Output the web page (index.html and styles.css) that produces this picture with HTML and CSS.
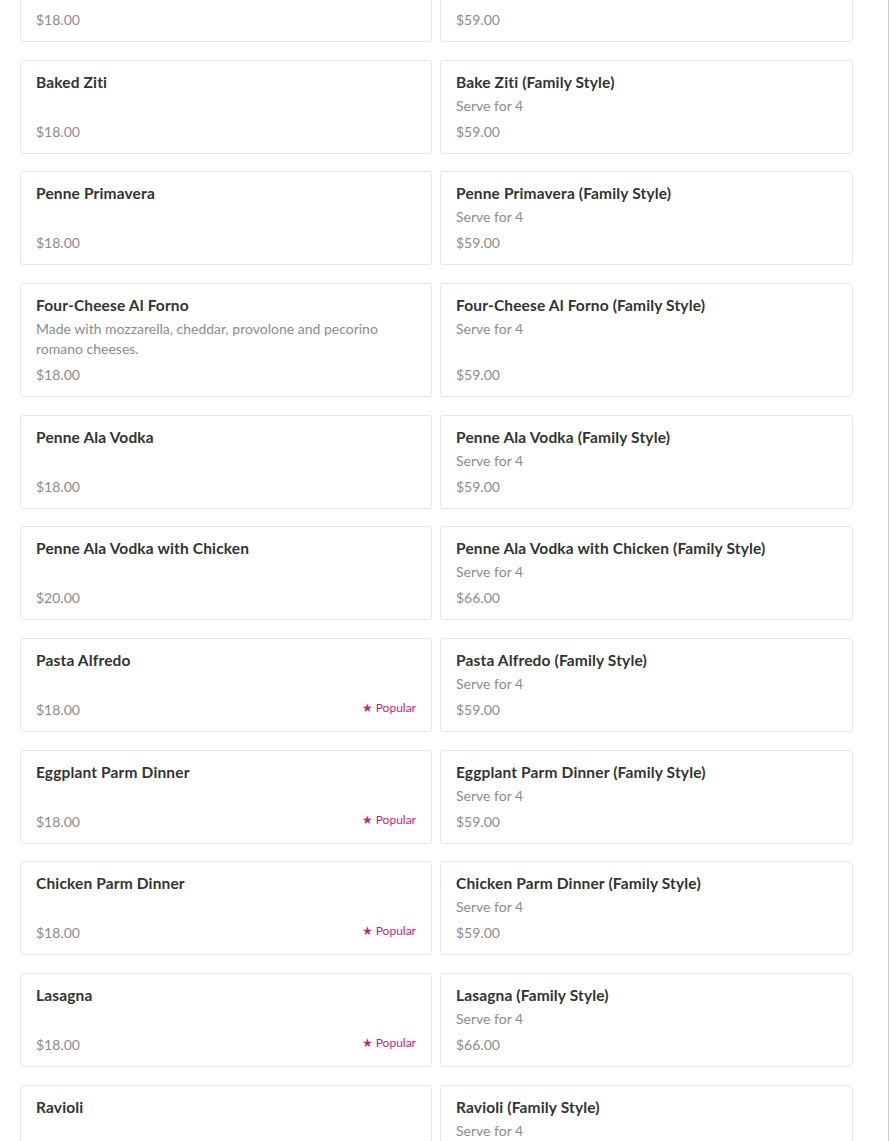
FILE: index.html
```html
<!DOCTYPE html>
<html lang="en">
<head>
<meta charset="utf-8">
<title>Menu</title>
<link rel="stylesheet" href="styles.css">
</head>
<body>
<div class="page">
  <div class="menu">
    <div class="card"><div class="name">Spaghetti Marinara</div><div class="desc"></div><div class="foot"><span class="price">$18.00</span></div></div>
    <div class="card"><div class="name">Spaghetti Marinara (Family Style)</div><div class="desc">Serve for 4</div><div class="foot"><span class="price">$59.00</span></div></div>

    <div class="card"><div class="name">Baked Ziti</div><div class="desc"></div><div class="foot"><span class="price">$18.00</span></div></div>
    <div class="card"><div class="name">Bake Ziti (Family Style)</div><div class="desc">Serve for 4</div><div class="foot"><span class="price">$59.00</span></div></div>

    <div class="card"><div class="name">Penne Primavera</div><div class="desc"></div><div class="foot"><span class="price">$18.00</span></div></div>
    <div class="card"><div class="name">Penne Primavera (Family Style)</div><div class="desc">Serve for 4</div><div class="foot"><span class="price">$59.00</span></div></div>

    <div class="card"><div class="name">Four-Cheese Al Forno</div><div class="desc">Made with mozzarella, cheddar, provolone and pecorino romano cheeses.</div><div class="foot"><span class="price">$18.00</span></div></div>
    <div class="card"><div class="name">Four-Cheese Al Forno (Family Style)</div><div class="desc">Serve for 4</div><div class="foot"><span class="price">$59.00</span></div></div>

    <div class="card"><div class="name">Penne Ala Vodka</div><div class="desc"></div><div class="foot"><span class="price">$18.00</span></div></div>
    <div class="card"><div class="name">Penne Ala Vodka (Family Style)</div><div class="desc">Serve for 4</div><div class="foot"><span class="price">$59.00</span></div></div>

    <div class="card"><div class="name">Penne Ala Vodka with Chicken</div><div class="desc"></div><div class="foot"><span class="price">$20.00</span></div></div>
    <div class="card"><div class="name">Penne Ala Vodka with Chicken (Family Style)</div><div class="desc">Serve for 4</div><div class="foot"><span class="price">$66.00</span></div></div>

    <div class="card"><div class="name">Pasta Alfredo</div><div class="desc"></div><div class="foot"><span class="price">$18.00</span><span class="popular">★ Popular</span></div></div>
    <div class="card"><div class="name">Pasta Alfredo (Family Style)</div><div class="desc">Serve for 4</div><div class="foot"><span class="price">$59.00</span></div></div>

    <div class="card"><div class="name">Eggplant Parm Dinner</div><div class="desc"></div><div class="foot"><span class="price">$18.00</span><span class="popular">★ Popular</span></div></div>
    <div class="card"><div class="name">Eggplant Parm Dinner (Family Style)</div><div class="desc">Serve for 4</div><div class="foot"><span class="price">$59.00</span></div></div>

    <div class="card"><div class="name">Chicken Parm Dinner</div><div class="desc"></div><div class="foot"><span class="price">$18.00</span><span class="popular">★ Popular</span></div></div>
    <div class="card"><div class="name">Chicken Parm Dinner (Family Style)</div><div class="desc">Serve for 4</div><div class="foot"><span class="price">$59.00</span></div></div>

    <div class="card"><div class="name">Lasagna</div><div class="desc"></div><div class="foot"><span class="price">$18.00</span><span class="popular">★ Popular</span></div></div>
    <div class="card"><div class="name">Lasagna (Family Style)</div><div class="desc">Serve for 4</div><div class="foot"><span class="price">$66.00</span></div></div>

    <div class="card"><div class="name">Ravioli</div><div class="desc"></div><div class="foot"><span class="price">$18.00</span></div></div>
    <div class="card"><div class="name">Ravioli (Family Style)</div><div class="desc">Serve for 4</div><div class="foot"><span class="price">$59.00</span></div></div>
  </div>
</div>
</body>
</html>
```
FILE: styles.css
```css
html, body {
  margin: 0;
  padding: 0;
  background: #fff;
  overflow: hidden;
}
body {
  font-family: Lato, "Liberation Sans", sans-serif;
  color: #333;
}
.page {
  width: 889px;
  min-height: 100vh;
  border-right: 1px solid #d2d2d2;
  box-sizing: border-box;
  padding: 0 0 0 20px;
}
.menu {
  display: grid;
  grid-template-columns: 412px 413px;
  column-gap: 8px;
  row-gap: 17.67px;
  margin-top: -52px;
}
.card {
  display: flex;
  flex-direction: column;
  border: 1px solid #e6e6e6;
  border-radius: 3px;
  padding: 9px 15px 11px;
  background: #fff;
}
.name {
  font-size: 15.5px;
  font-weight: 700;
  letter-spacing: 0.15px;
  line-height: 24px;
  color: #333;
}
.desc {
  font-size: 14px;
  line-height: 20px;
  min-height: 20px;
  margin-top: 2px;
  color: #8c8c8c;
}
.foot {
  margin-top: auto;
  padding-top: 6px;
  display: flex;
  justify-content: space-between;
  align-items: flex-start;
  height: 20px;
}
.price {
  font-size: 14px;
  line-height: 20px;
  color: #8c8c8c;
}
.popular {
  font-size: 12px;
  line-height: 16px;
  color: #c0267c;
}
```
